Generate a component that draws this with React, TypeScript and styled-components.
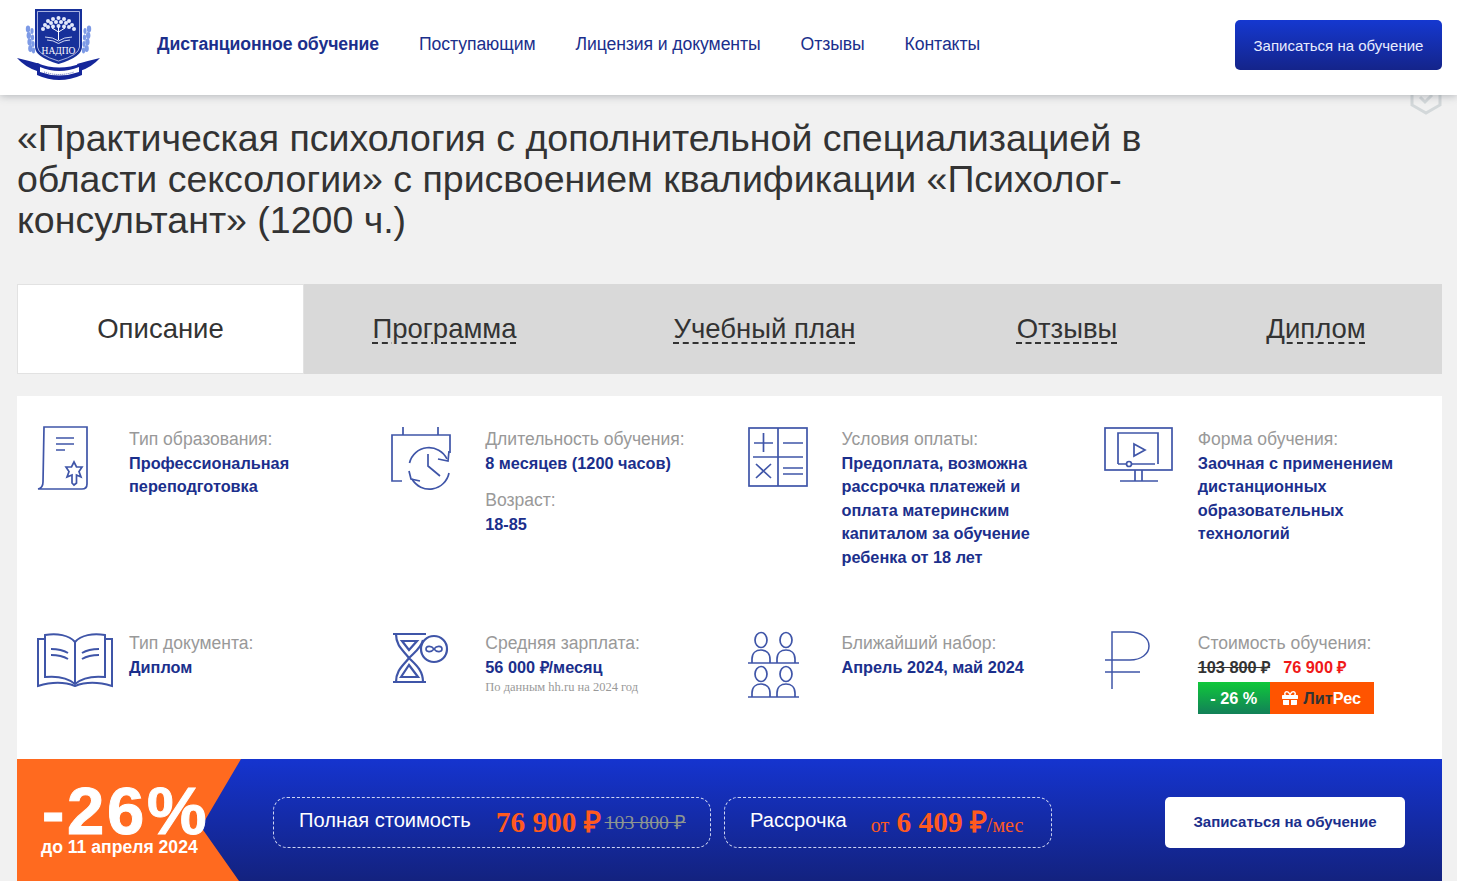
import { ReactNode } from "react";
import styled, { createGlobalStyle } from "styled-components";
import { FaGift } from "react-icons/fa";

const navy = "#1b2f8c";
const line = "#3f55a8";

const GlobalStyle = createGlobalStyle`
  html, body {
    margin: 0;
    padding: 0;
    height: 881px;
    overflow: hidden;
    background: #f1f1f1;
    font-family: "Liberation Sans", Arial, sans-serif;
  }
`;

const Header = styled.header`
  height: 95px;
  background: #fff;
  display: flex;
  align-items: center;
  padding: 0 15px 0 16px;
  box-shadow: 0 1px 8px rgba(60, 70, 80, 0.35);
  position: relative;
  z-index: 2;
`;

const LogoBox = styled.div`
  width: 85px;
  height: 75px;
  margin-top: -6px;
  flex-shrink: 0;
`;

const Nav = styled.nav`
  display: flex;
  gap: 40px;
  margin-left: 56px;
  flex: 1;
  margin-top: -7px;
`;

const NavLink = styled.a<{ $active?: boolean }>`
  font-size: 17.65px;
  letter-spacing: -0.1px;
  color: ${navy};
  font-weight: ${(p) => (p.$active ? 700 : 400)};
`;

const HeaderButton = styled.button`
  width: 207px;
  height: 50px;
  margin-top: -5px;
  border: none;
  border-radius: 5px;
  background: linear-gradient(#1538d0, #14248a);
  color: #e8ecff;
  font-family: inherit;
  font-size: 15px;
  padding: 0;
`;

const Main = styled.main`
  padding: 0 15px 0 17px;
  position: relative;
`;

const ShieldMark = styled.svg`
  position: absolute;
  top: -4px;
  right: 15px;
`;

const Title = styled.h1`
  margin: 0;
  padding-top: 23px;
  width: 1180px;
  height: 166px;
  font-weight: 400;
  font-size: 37.5px;
  line-height: 41px;
  color: #333;
`;

const Tabs = styled.div`
  display: grid;
  grid-template-columns: 287px 281px 359px 246px 252px;
  height: 90px;
  background: #d9d9d9;
`;

const Tab = styled.div<{ $active?: boolean }>`
  display: flex;
  align-items: center;
  justify-content: center;
  font-size: 27.5px;
  color: #333;
  background: ${(p) => (p.$active ? "#fff" : "transparent")};
  border: ${(p) => (p.$active ? "1px solid #e2e2e2" : "none")};
  text-decoration: ${(p) => (p.$active ? "none" : "underline dashed 1.5px")};
  text-underline-offset: 4px;
`;

const Panel = styled.section`
  margin-top: 22px;
  background: #fff;
  height: 363px;
  display: grid;
  grid-template-columns: repeat(4, 1fr);
  grid-template-rows: 204px 159px;
`;

const Cell = styled.div`
  display: grid;
  grid-template-columns: 94px 1fr;
  padding: 31px 20px 0 18px;
`;

const IconBox = styled.div<{ $left?: number }>`
  margin-left: ${(p) => p.$left ?? 0}px;

  svg {
    display: block;
    overflow: visible;
  }
`;

const Label = styled.div<{ $gap?: boolean }>`
  font-size: 17.55px;
  line-height: 25px;
  color: #999;
  margin-top: ${(p) => (p.$gap ? "13px" : "0")};
`;

const Value = styled.div`
  font-size: 16.3px;
  font-weight: 700;
  line-height: 23.4px;
  color: ${navy};
`;

const Note = styled.div`
  font-family: "Liberation Serif", serif;
  font-size: 12.5px;
  line-height: 16px;
  color: #999;
`;

const PriceRow = styled.div`
  font-size: 16.3px;
  font-weight: 700;
  line-height: 23.4px;
  display: flex;
  gap: 13px;
`;

const OldPrice = styled.span`
  color: #333;
  text-decoration: line-through;
`;

const NewPrice = styled.span`
  color: #f01818;
`;

const Badges = styled.div`
  display: flex;
  height: 32px;
  margin-top: 3px;
  font-size: 16.3px;
  font-weight: 700;
`;

const DiscountBadge = styled.div`
  width: 72px;
  display: flex;
  align-items: center;
  justify-content: center;
  color: #fff;
  background: linear-gradient(#10c83a, #128058);
`;

const GiftBadge = styled.div`
  width: 104px;
  display: flex;
  align-items: center;
  justify-content: center;
  gap: 5px;
  color: #fff;
  background: #ff5400;
`;

const Dark = styled.span`
  color: #333;
`;

const Banner = styled.section`
  height: 122px;
  background: linear-gradient(#1534cf, #13227f);
  display: flex;
  align-items: flex-start;
  position: relative;
  overflow: hidden;
`;

const Promo = styled.div`
  width: 256px;
  height: 100%;
  flex-shrink: 0;
  position: relative;
  color: #fff;
  font-weight: 700;
`;

const PromoShape = styled.svg`
  position: absolute;
  inset: 0;
`;

const PromoPercent = styled.div`
  position: relative;
  font-size: 67px;
  line-height: 60px;
  padding: 22px 0 0 25px;
  letter-spacing: 2.75px;
  -webkit-text-stroke: 1px #fff;
  white-space: nowrap;
`;

const PromoDate = styled.div`
  position: relative;
  font-size: 17.6px;
  line-height: 18px;
  margin-top: -3px;
  padding: 0 0 0 24px;
  white-space: nowrap;
`;

const PriceBox = styled.div<{ $width: number; $gap: number }>`
  width: ${(p) => p.$width}px;
  height: 51px;
  margin-top: 38px;
  margin-left: ${(p) => p.$gap}px;
  box-sizing: border-box;
  border: 1px dashed #cfd6f2;
  border-radius: 14px;
  display: flex;
  align-items: center;
  padding-left: 25px;
  color: #fff;
  font-size: 20.1px;
  flex-shrink: 0;
`;

const BoxLabel = styled.span`
  margin-top: -5px;
`;

const BigPrice = styled.span<{ $left: number }>`
  font-family: "Liberation Serif", serif;
  color: #ff5a1f;
  font-weight: 700;
  font-size: 29.3px;
  margin-top: -4px;
  margin-left: ${(p) => p.$left}px;
  white-space: nowrap;
`;

const Struck = styled.span`
  font-family: "Liberation Serif", serif;
  font-size: 19.8px;
  color: #8d9690;
  text-decoration: line-through;
  margin-top: -3px;
  margin-left: 4px;
`;

const Small = styled.span`
  font-weight: 400;
  font-size: 20px;
`;

const BannerButton = styled.button`
  width: 240px;
  height: 51px;
  margin: 38px 0 0 113px;
  border: none;
  border-radius: 5px;
  background: #fff;
  color: ${navy};
  font-family: inherit;
  font-weight: 700;
  font-size: 15.05px;
  padding: 0 0 2px;
`;

const canopy = [
  [42.5, 11], [37, 12], [48, 12], [32, 14], [53, 14], [29, 18], [56, 18], [35, 16], [40, 15],
  [45, 15], [50, 16], [32, 20], [37, 19.5], [42.5, 19], [48, 19.5], [53, 20], [27, 22], [58, 22],
];

const Logo = () => (
  <svg width="85" height="75" viewBox="0 0 85 75">
    <g fill="#7d9ae6">
      {[0, 1, 2, 3].map((i) => (
        <g key={i}>
          <ellipse cx={12 + i * 0.8} cy={22 + i * 6.5} rx="2.2" ry="3.4" />
          <ellipse cx={16 + i * 0.5} cy={24 + i * 6.5} rx="1.6" ry="3" />
          <ellipse cx={73 - i * 0.8} cy={22 + i * 6.5} rx="2.2" ry="3.4" />
          <ellipse cx={69 - i * 0.5} cy={24 + i * 6.5} rx="1.6" ry="3" />
        </g>
      ))}
    </g>
    <path d="M1 51Q14 54 24 57L21 64Q9 60 1 51Z" fill="#15269a" />
    <path d="M84 51Q71 54 61 57L64 64Q76 60 84 51Z" fill="#15269a" />
    <path d="M19 2H66V40Q66 50 42.5 57Q19 50 19 40Z" fill="#17309a" />
    <path d="M21.5 4.5H63.5V40Q63 48 42.5 54Q22 48 21.5 40Z" fill="none" stroke="#e6ebff" strokeWidth="0.7" />
    <g fill="#e3e9fb">
      {canopy.map(([cx, cy]) => (
        <circle key={`${cx}-${cy}`} cx={cx} cy={cy} r="2" />
      ))}
    </g>
    <path d="M42.5 20V33M42.5 25L36 21M42.5 25L49 21" stroke="#fff" strokeWidth="1" fill="none" />
    <path d="M29 30Q37 30 42.5 34Q48 30 56 30M31 33Q37 33 42.5 36.5Q48 33 54 33" stroke="#e3e9fb" strokeWidth="0.9" fill="none" />
    <text x="42.5" y="47" textAnchor="middle" fontFamily="Liberation Serif" fontSize="9.5" fill="#fff">
      НАДПО
    </text>
    <path d="M21 56Q43 65 66 56V68Q43 78 21 68Z" fill="#15269a" />
    <path d="M24 60Q43 68 63 60V65Q43 72 24 65Z" fill="#fff" />
    <path d="M28 65Q43 70 58 65" stroke="#15269a" strokeWidth="0.7" strokeDasharray="1 1" fill="none" />
  </svg>
);

const iconProps = {
  fill: "none",
  stroke: line,
  strokeWidth: 1.7,
};

const DiplomaIcon = () => (
  <svg width="51" height="65" viewBox="0 1 51 65" {...iconProps}>
    <path d="M7 1H50V58Q50 63 45 63H1Q6 62 6 56Z" />
    <path d="M19 12H37M19 18H37M19 24H28" />
    <path d="M37 36L39.5 41L45 41L42 45.5L44 51L39.5 49V57L37 59L35 57V49L30 51L32 45.5L29 41L34.5 41Z" />
  </svg>
);

const ClockIcon = () => (
  <svg width="62" height="65" viewBox="0 1 62 65" {...iconProps}>
    <path d="M12 1V9H47V1M47 9H59V27M12 9H1V55H11" />
    <path d="M18.5 37A20 20 0 0 1 56 33M58 47A20 20 0 0 1 21 53" />
    <path d="M47 33L57 35L58 25M29 55L20 53L18 45" />
    <path d="M37 28V40L49 50" />
  </svg>
);

const MathIcon = () => (
  <svg width="60" height="60" viewBox="0 0 60 60" {...iconProps}>
    <rect x="1" y="1" width="58" height="58" />
    <path d="M30 1V59M5 30H55" />
    <path d="M6 16H25M15.5 6V25M35 16H55M8 37L23 51M23 37L8 51M35 41H55M35 47H55" />
  </svg>
);

const ScreenIcon = () => (
  <svg width="70" height="56" viewBox="0 0 70 56" {...iconProps}>
    <rect x="1" y="1" width="67" height="42" />
    <path d="M14 37V6H54V37" />
    <path d="M30 17L41 23L30 29Z" />
    <path d="M14 37H22M28 37H51" />
    <circle cx="25" cy="37" r="2.5" />
    <path d="M31 43V54M38 43V54M16 54H54" />
  </svg>
);

const BookIcon = () => (
  <svg width="76" height="56" viewBox="0 -1 76 56" {...iconProps} strokeWidth={2}>
    <path d="M38 52C30 45 18 44 8 45V3C20 1 32 3 38 10C44 3 56 1 68 3V45C58 44 46 45 38 52Z" />
    <path d="M38 10V52" />
    <path d="M8 7H1V54C14 50 28 50 38 54C48 50 62 50 75 54V7H68" />
    <path d="M14 17C20 17 26 18 31 21M14 23C20 23 26 24 31 27M62 17C56 17 50 18 45 21M62 23C56 23 50 24 45 27" />
  </svg>
);

const HourglassIcon = () => (
  <svg width="58" height="52" viewBox="1 -1 58 52" {...iconProps} strokeWidth={2.2}>
    <path d="M3 2H36M3 50H36" />
    <path d="M6 2C6 14 13 18 19 26C13 34 6 38 6 50M33 8C31 16 25 20 19 26C25 32 33 38 33 50" />
    <path d="M12 9H27L19 18ZM11 45L19 33L28 45Z" />
    <circle cx="44" cy="17" r="13" />
    <path d="M44 17C41 13 36 14 36 17C36 20 41 21 44 17C47 13 52 14 52 17C52 20 47 21 44 17Z" strokeWidth={1.6} />
  </svg>
);

const PeopleIcon = () => (
  <svg width="52" height="68" viewBox="1 0 52 68" {...iconProps}>
    <ellipse cx="14" cy="9" rx="6" ry="7.5" />
    <ellipse cx="39" cy="9" rx="6" ry="7.5" />
    <path d="M5 32V28C5 22 9 19 14 19C19 19 23 22 23 28V32M30 32V28C30 22 34 19 39 19C44 19 48 22 48 28V32" />
    <path d="M1 32H52" />
    <ellipse cx="14" cy="43" rx="6" ry="7.5" />
    <ellipse cx="39" cy="43" rx="6" ry="7.5" />
    <path d="M5 66V62C5 56 9 53 14 53C19 53 23 56 23 62V66M30 66V62C30 56 34 53 39 53C44 53 48 56 48 62V66" />
    <path d="M1 66H52" />
  </svg>
);

const RubleIcon = () => (
  <svg width="46" height="60" viewBox="0 0 46 60" {...iconProps} strokeWidth={1.5}>
    <path d="M8 58V1H26C37 1 45 7 45 15C45 23 37 29 26 29H1M1 41H36" />
  </svg>
);

type InfoProps = { icon: ReactNode; left?: number; children: ReactNode };

const Info = ({ icon, left, children }: InfoProps) => (
  <Cell>
    <IconBox $left={left}>{icon}</IconBox>
    <div>{children}</div>
  </Cell>
);

export default function App() {
  return (
    <>
      <GlobalStyle />
      <Header>
        <LogoBox>
          <Logo />
        </LogoBox>
        <Nav>
          <NavLink $active>Дистанционное обучение</NavLink>
          <NavLink>Поступающим</NavLink>
          <NavLink>Лицензия и документы</NavLink>
          <NavLink>Отзывы</NavLink>
          <NavLink>Контакты</NavLink>
        </Nav>
        <HeaderButton>Записаться на обучение</HeaderButton>
      </Header>
      <Main>
        <ShieldMark width="32" height="24" viewBox="0 0 32 24">
          <path d="M2 4V14L16 22L30 14V4" fill="none" stroke="#d3d8da" strokeWidth="3" />
          <path d="M10 6L15 11L22 4" fill="none" stroke="#d3d8da" strokeWidth="3" />
        </ShieldMark>
        <Title>
          «Практическая психология с дополнительной специализацией в области сексологии» с присвоением
          квалификации «Психолог-консультант» (1200 ч.)
        </Title>
        <Tabs>
          <Tab $active>Описание</Tab>
          <Tab>Программа</Tab>
          <Tab>Учебный план</Tab>
          <Tab>Отзывы</Tab>
          <Tab>Диплом</Tab>
        </Tabs>
        <Panel>
          <Info icon={<DiplomaIcon />} left={2}>
            <Label>Тип образования:</Label>
            <Value>
              Профессиональная
              <br />
              переподготовка
            </Value>
          </Info>
          <Info icon={<ClockIcon />}>
            <Label>Длительность обучения:</Label>
            <Value>8 месяцев (1200 часов)</Value>
            <Label $gap>Возраст:</Label>
            <Value>18-85</Value>
          </Info>
          <Info icon={<MathIcon />}>
            <Label>Условия оплаты:</Label>
            <Value>
              Предоплата, возможна
              <br />
              рассрочка платежей и
              <br />
              оплата материнским
              <br />
              капиталом за обучение
              <br />
              ребенка от 18 лет
            </Value>
          </Info>
          <Info icon={<ScreenIcon />}>
            <Label>Форма обучения:</Label>
            <Value>
              Заочная с применением
              <br />
              дистанционных
              <br />
              образовательных
              <br />
              технологий
            </Value>
          </Info>
          <Info icon={<BookIcon />} left={2}>
            <Label>Тип документа:</Label>
            <Value>Диплом</Value>
          </Info>
          <Info icon={<HourglassIcon />}>
            <Label>Средняя зарплата:</Label>
            <Value>56 000 ₽/месяц</Value>
            <Note>По данным hh.ru на 2024 год</Note>
          </Info>
          <Info icon={<PeopleIcon />}>
            <Label>Ближайший набор:</Label>
            <Value>Апрель 2024, май 2024</Value>
          </Info>
          <Info icon={<RubleIcon />}>
            <Label>Стоимость обучения:</Label>
            <PriceRow>
              <OldPrice>103 800 ₽</OldPrice>
              <NewPrice>76 900 ₽</NewPrice>
            </PriceRow>
            <Badges>
              <DiscountBadge>- 26 %</DiscountBadge>
              <GiftBadge>
                <FaGift size={16} />
                <span>
                  <Dark>Лит</Dark>Рес
                </span>
              </GiftBadge>
            </Badges>
          </Info>
        </Panel>
        <Banner>
          <Promo>
            <PromoShape width="256" height="122" viewBox="0 0 256 122">
              <path d="M0 0H224L184 68L222 122H0Z" fill="#ff6a1f" />
            </PromoShape>
            <PromoPercent>-26%</PromoPercent>
            <PromoDate>до 11 апреля 2024</PromoDate>
          </Promo>
          <PriceBox $width={438} $gap={0}>
            <BoxLabel>Полная стоимость</BoxLabel>
            <BigPrice $left={25}>76 900 ₽</BigPrice>
            <Struck>103 800 ₽</Struck>
          </PriceBox>
          <PriceBox $width={328} $gap={13}>
            <BoxLabel>Рассрочка</BoxLabel>
            <BigPrice $left={24}>
              <Small>от</Small> 6 409 ₽<Small>/мес</Small>
            </BigPrice>
          </PriceBox>
          <BannerButton>Записаться на обучение</BannerButton>
        </Banner>
      </Main>
    </>
  );
}
